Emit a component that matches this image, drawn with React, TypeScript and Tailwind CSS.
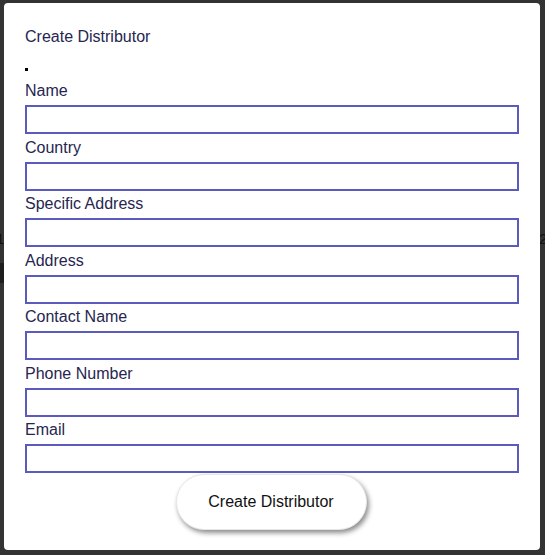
const fields = ['Name', 'Country', 'Specific Address', 'Address', 'Contact Name', 'Phone Number', 'Email']

const App = () => {
	return (
		<div className="relative w-[545px] h-[555px] bg-[#333333] overflow-hidden font-['Liberation_Sans',Arial,sans-serif]">
			{/* page behind the overlay */}
			<div className="absolute left-0 top-[263px] w-[6px] h-[20px] bg-[#1e1e1e]" />
			<div className="absolute left-[-4px] top-[231px] text-[15px] leading-none text-[#111]">1</div>
			<div className="absolute left-[539px] top-[231px] text-[15px] leading-none text-[#111]">2</div>

			<div className="absolute left-[4px] top-[3px] w-[536px] h-[547px] bg-white rounded-[4px] px-[21px] pt-[25px]">
				<p className="text-[16px] leading-[18px] text-[#26264f]">Create Distributor</p>
				<div className="mt-[22px] w-[3px] h-[3px] bg-black" />
				<form className="mt-[8px] flex flex-col" onSubmit={(e) => e.preventDefault()}>
					{fields.map((f) => (
						<div key={f} className="flex flex-col mb-[1.5px]">
							<label className="text-[16px] leading-6 text-[#26264f] mb-[2px]">{f}</label>
							<input className="w-[494px] h-[29px] border-2 border-[#5b5bbd] bg-white outline-none" />
						</div>
					))}
					<div className="flex justify-center mt-[-1px] pr-[2px]">
						<button
							type="submit"
							className="w-[191px] h-[56px] rounded-[28px] bg-white text-[16px] text-[#111] shadow-[2px_3px_5px_rgba(0,0,0,0.45)] border border-[#e6e6e6]"
						>
							Create Distributor
						</button>
					</div>
				</form>
			</div>
		</div>
	)
}

export default App
